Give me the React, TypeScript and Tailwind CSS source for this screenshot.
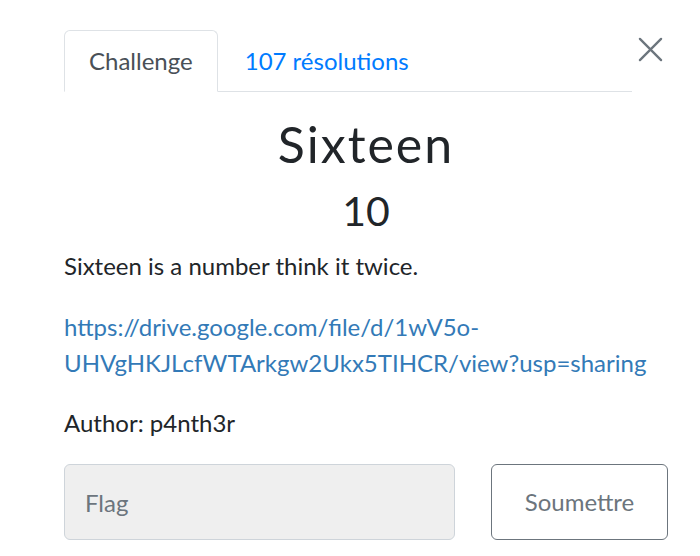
export default function App() {
  return (
    <div className="w-[700px] h-[556px] bg-white overflow-hidden font-['Lato','Liberation_Sans',sans-serif] text-[#212529]">
      <div className="pl-[64px] pr-[32px] pt-[30px]">
        <div className="flex items-start">
          <div className="w-[568px] flex border-b border-[#dee2e6] h-[62px]">
            <div className="px-[24px] flex items-center border border-[#dee2e6] border-b-white rounded-t-[6px] bg-white -mb-px text-[24px] text-[#495057]">
              Challenge
            </div>
            <div className="px-[27px] flex items-center text-[24px] text-[#007bff]">107 résolutions</div>
          </div>
          <button className="ml-[5px] mt-[6px] w-[26px] h-[26px] flex items-center justify-center text-[#6c757d]">
            <svg width="25" height="25" viewBox="0 0 26 26" fill="none" stroke="currentColor" strokeWidth="2.4" strokeLinecap="round">
              <path d="M2 2L24 24M24 2L2 24" />
            </svg>
          </button>
        </div>

        <h1 className="mt-[22px] text-center text-[50px] leading-[60px] tracking-[2px] font-normal">Sixteen</h1>
        <div className="text-center text-[41px] leading-[48px] mt-[13px]">10</div>

        <p className="mt-[13px] text-[24px] leading-[36px]">Sixteen is a number think it twice.</p>
        <p className="mt-[25px] text-[24px] leading-[36px] text-[#337ab7]">
          https://drive.google.com/file/d/1wV5o-
          <br />
          UHVgHKJLcfWTArkgw2Ukx5TIHCR/view?usp=sharing
        </p>
        <p className="mt-[24px] text-[24px] leading-[36px]">Author: p4nth3r</p>

        <div className="mt-[23px] flex gap-[36px]">
          <input
            className="w-[391px] h-[76px] rounded-[6px] border border-[#ced4da] bg-[#efefef] px-[20px] text-[24px] placeholder-[#6c757d] outline-none"
            placeholder="Flag"
          />
          <button className="flex-1 h-[76px] rounded-[6px] border border-[#6c757d] text-[24px] text-[#6c757d] bg-white">
            Soumettre
          </button>
        </div>
      </div>
    </div>
  );
}
